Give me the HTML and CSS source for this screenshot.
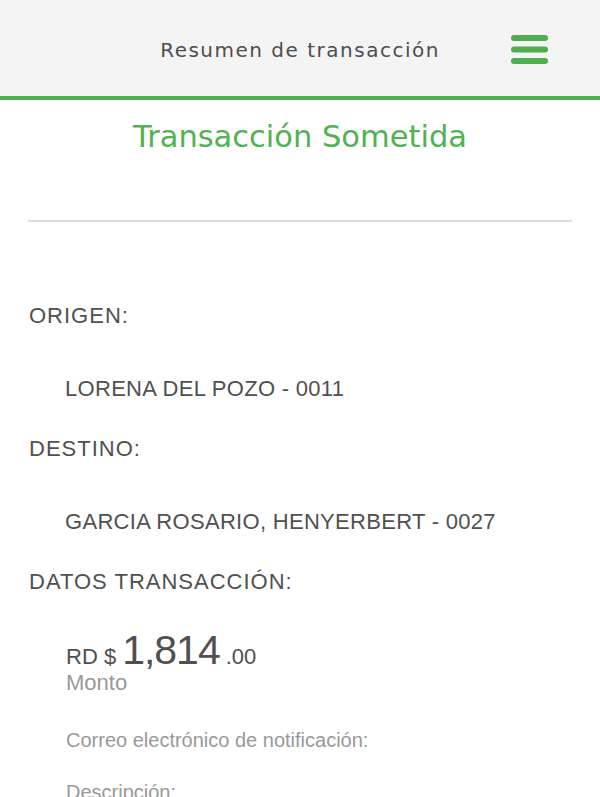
FILE: index.html
```html
<!DOCTYPE html>
<html lang="es">
<head>
    <meta charset="UTF-8">
    <meta name="viewport" content="width=device-width, initial-scale=1.0">
    <title>Resumen de transacción</title>
    <link rel="stylesheet" href="styles.css">
</head>
<body>
    <header class="topbar">
        <span></span>
        <h2 class="topbar-title">Resumen de transacción</h2>
        <a class="menu-btn" aria-label="Menú">
            <svg width="37" height="30" viewBox="0 0 37 30">
                <line x1="3" y1="3" x2="34" y2="3" />
                <line x1="3" y1="14.5" x2="34" y2="14.5" />
                <line x1="3" y1="26" x2="34" y2="26" />
            </svg>
        </a>
    </header>

    <div class="main">
        <h1 class="status">Transacción Sometida</h1>
        <hr class="divider">

        <div class="section">
            <div class="label">ORIGEN:</div>
            <div class="value">LORENA DEL POZO - 0011</div>
        </div>

        <div class="section">
            <div class="label">DESTINO:</div>
            <div class="value">GARCIA ROSARIO, HENYERBERT - 0027</div>
        </div>

        <div class="section">
            <div class="label">DATOS TRANSACCIÓN:</div>
            <div class="details">
                <div class="amount">
                    <span class="currency">RD $</span>
                    <span class="amount-int">1,814</span>
                    <span class="amount-dec">.00</span>
                </div>
                <div class="hint">Monto</div>
                <div class="field">Correo electrónico de notificación:</div>
                <div class="field">Descripción:</div>
            </div>
        </div>
    </div>
</body>
</html>
```

FILE: styles.css
```css
body {
    margin: 0;
    padding: 0;
    background-color: #ffffff;
    font-family: "Liberation Sans", Arial, sans-serif;
    color: #505050;
    overflow: hidden;
}

.topbar {
    display: grid;
    grid-template-columns: 1fr auto 1fr;
    align-items: center;
    height: 96px;
    background-color: #f4f4f4;
    border-bottom: 4px solid #4fae4f;
    box-sizing: content-box;
}

.topbar-title {
    margin: 0;
    padding-top: 4px;
    font-family: "DejaVu Sans", Tahoma, sans-serif;
    font-weight: normal;
    font-size: 20px;
    letter-spacing: 1.5px;
    color: #4e4e4e;
}

.menu-btn {
    justify-self: end;
    margin: 3px 52px 0 0;
    height: 30px;
    cursor: pointer;
}

.menu-btn svg line {
    stroke: #4fae4f;
    stroke-width: 6;
    stroke-linecap: round;
}

.main {
    padding: 0 28px;
}

.status {
    margin: 19px 0 0;
    text-align: center;
    font-family: "DejaVu Sans", Tahoma, sans-serif;
    font-weight: normal;
    font-size: 30.5px;
    line-height: 36px;
    color: #52b152;
}

.divider {
    margin: 65px 0 0;
    border: none;
    height: 2px;
    background-color: #dedede;
}

.section {
    padding-left: 1px;
}

.section:first-of-type {
    margin-top: 81px;
}

.label {
    font-size: 22px;
    line-height: 26px;
    letter-spacing: 1px;
}

.value {
    margin: 47px 0 34px 36px;
    font-size: 22px;
    line-height: 26px;
    letter-spacing: 0.3px;
}

.details {
    margin: 35px 0 0 37px;
}

.amount {
    display: flex;
    align-items: baseline;
    gap: 6px;
    line-height: 40px;
}

.currency {
    font-size: 22px;
}

.amount-int {
    font-size: 41px;
    letter-spacing: -1px;
}

.amount-dec {
    font-size: 22px;
}

.hint {
    margin-top: -6px;
    font-size: 22px;
    line-height: 24px;
    color: #999;
}

.field {
    margin-top: 33px;
    font-size: 20px;
    line-height: 24px;
    color: #999;
}

.field + .field {
    margin-top: 28px;
}
```
